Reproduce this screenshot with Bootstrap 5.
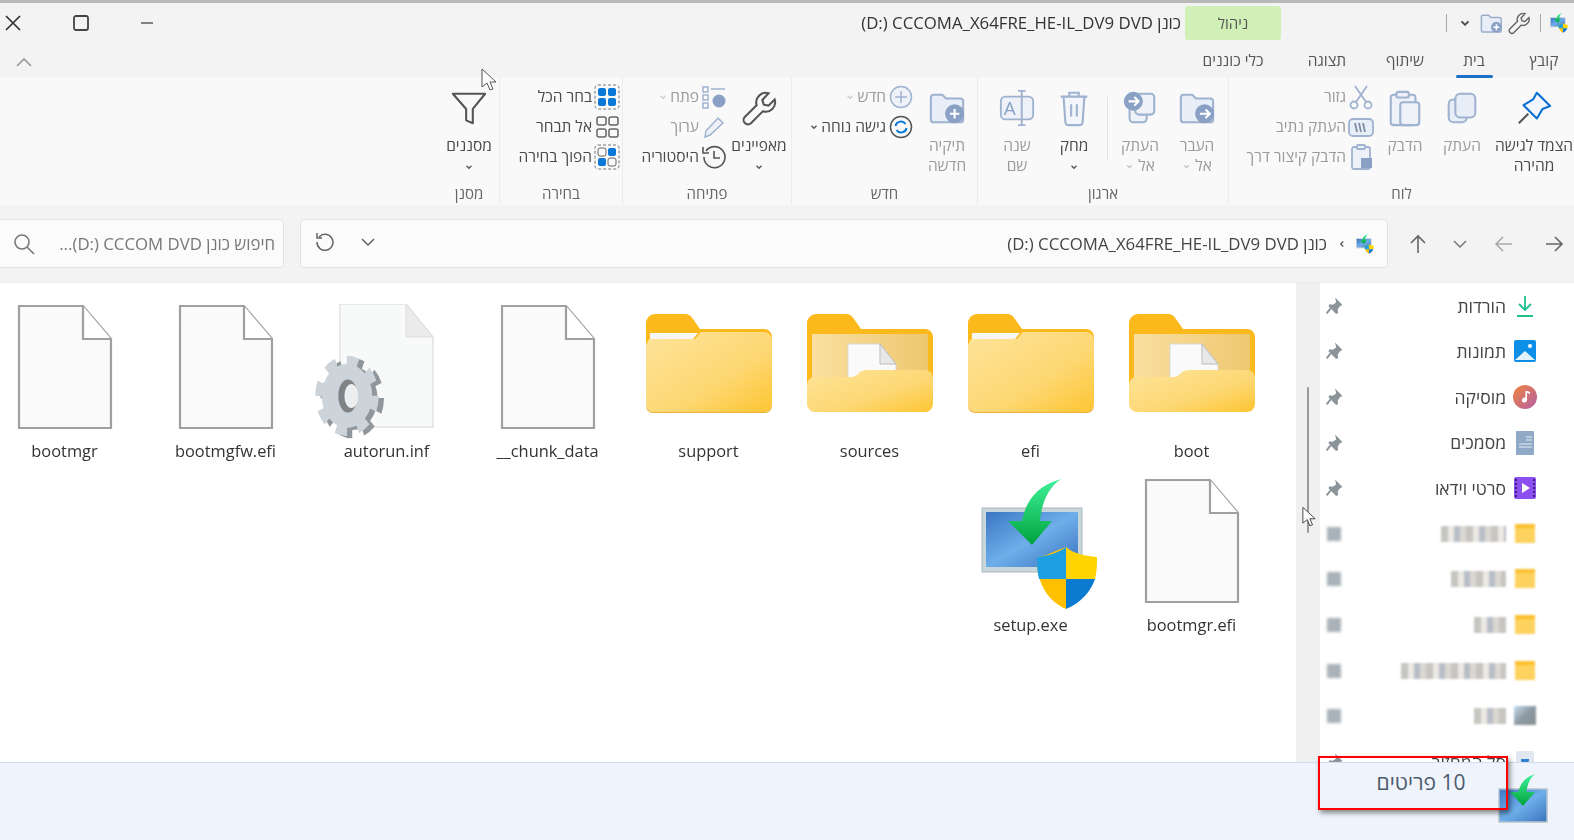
<!DOCTYPE html>
<html lang="he" dir="rtl">
<head>
<meta charset="utf-8">
<title>כונן DVD</title>
<link href="https://cdn.jsdelivr.net/npm/bootstrap@5.3.0/dist/css/bootstrap.min.css" rel="stylesheet">
<style>
html,body{margin:0;width:1574px;height:840px;overflow:hidden;background:#f3f3f3}
body{font-family:"Open Sans","Noto Sans","Liberation Sans",sans-serif;color:#444}
.stage{width:1574px;height:840px;position:relative;overflow:hidden}
.win{width:1574px;height:840px;background:#f3f3f3;filter:blur(.35px)}
.topline{height:3px;background:#b9b9b9;flex:none}
.titlerow{height:40px;flex:none}
.tsep{width:1px;height:18px;background:#aaa}
.qa{margin:0 5px 0 0}
.gapw{margin-left:9px}
.gapf{margin-left:4px}
.gapc{margin-left:3px;margin-right:7px}
.sepg{margin-left:165px;margin-right:8px}
.manage{width:96px;height:34px;background:#d0f0b7;border-radius:3px;font-size:15px;color:#555;flex:none}
.wtitle{font-size:16.800px;color:#333;margin-right:4px;white-space:nowrap}
.wctl{gap:52px;padding-left:4px}
.tabsrow{height:34px;flex:none;font-size:15.500px;color:#555;padding-top:3px}
.rtab{text-align:center;position:relative;line-height:30px;padding-bottom:4px}
.w60{width:60px}.w80{width:80px}.w58{width:58px}.w98{width:98px}.w90{width:90px}
.rtab-on::after{content:"";position:absolute;bottom:1px;left:22px;right:21px;height:3px;background:#1a73c9;border-radius:2px}
.ribbon{height:128px;background:#f9f9f9;flex:none}
.rgroup{height:128px;border-left:1px solid #ececec;padding-top:4px;flex:none}
.rbody{height:102px}
.rcap{height:20px;line-height:20px;text-align:center;font-size:15px;color:#666}
.g1{width:346px}.g2{width:251px}.g3{width:186px}.g4{width:169px}.g5{width:123px}.g6{width:60px;border-left:0}
.rlg{flex:none;text-align:center;font-size:15.500px;line-height:20px;color:#9b9b9b}
.rlg svg{display:block;margin:8px auto 8px;width:38px;height:38px}
.rlg.dark,.rsm.dark{color:#4a4a4a}
.b80{width:80px;display:flex;flex-direction:column;align-items:center;white-space:nowrap}
.b64{width:64px}.b50{width:50px}.b62{width:62px}.b52{width:52px}.b56{width:56px}.b58{width:58px}.b60{width:60px}
.rvsep{width:1px;height:64px;background:#e2e2e2;margin:16px 6px 0 5px;flex:none}
.rsm{height:30px;padding-top:2px;font-size:15.500px;color:#9b9b9b;white-space:nowrap;gap:2px}
.rsm svg.ic{width:26px;height:26px;flex:none}
.smcol{padding-right:6px}
.smcol3{padding-right:3px}
.selic{margin-right:2px}
.chev{width:10px;height:10px;display:inline-block;vertical-align:middle}
.addr{height:77px;flex:none;padding:14px 0}
.navbtns{width:186px;flex:none;padding-right:9px}
.navbtns svg{width:22px;height:22px}
.navbtns svg.nb1{margin-left:28px}
.navbtns svg.nb2{margin-left:25px}
.navbtns svg.nb3{width:16px;height:16px;margin-left:23px}
.abar{height:49px;width:1088px;flex:none;background:#fbfbfb;border:1px solid #e3e3e3;border-radius:4px;font-size:16.800px;color:#444;padding:0 12px 0 9px}
.crumb{margin-right:6px}
.sbar{height:49px;width:290px;flex:none;margin-right:16px;background:#fbfbfb;border:1px solid #e3e3e3;border-radius:4px;font-size:16.800px;color:#777;padding:0 8px 0 0;white-space:nowrap}
.mainarea{height:480px;flex:none;background:#fff;border-top:1px solid #ececec}
.navpane{width:254px;flex:none;overflow:hidden;background:#fff}
.navrow{height:45.600px;padding:0 37px 0 0;font-size:17.500px;color:#444;white-space:nowrap;flex:none;gap:7px}
.navic{width:24px;height:24px;flex:none}
.navpin{width:18px;height:18px;flex:none;margin-right:auto;margin-left:5px}
.mosaic{height:16px;background:repeating-linear-gradient(90deg,#c6c5c0 0 7px,#ece9e4 7px 13px,#b7bec6 13px 19px,#dbd7d2 19px 25px);filter:blur(1.2px)}
.m60{width:65px}.m50{width:55px}.m30{width:32px}.m100{width:105px}
.blurbox{width:24px;height:20px;display:flex;justify-content:center;flex:none}
.blurfold{width:20px;height:19px;background:#fdd25e;border-top:4px solid #fbbf2e;filter:blur(1px)}
.blurdesk{width:22px;height:19px;background:linear-gradient(135deg,#c6dcf0 0,#8c9aa4 50%,#8a8f92 100%);filter:blur(1.2px)}
.blurpin{width:14px;height:14px;background:#a9b2b8;filter:blur(1.6px);margin-right:auto;margin-left:7px;flex:none}
.sbtrack{width:24px;flex:none;background:#f0f0f0}
.sbthumb{width:2.500px;height:146px;background:#9a9a9a;border-radius:2px;margin:104px auto 0}
.content{flex:1 1 auto;overflow:hidden;min-width:0;padding:21px 24px 0 0}
.filegrid{display:grid;grid-template-columns:repeat(8,161px);grid-auto-rows:174px;width:1288px}
.fcell{text-align:center;font-size:16.400px;color:#333;white-space:nowrap}
.ficon{height:126px;display:flex;align-items:center;justify-content:center;margin-bottom:9px}
.fld{margin-top:-8px}
.setupbig{margin-left:18px;margin-top:8px}
.gearfile{margin-top:14px}
.status{flex:1 1 auto;background:#eff3fb;border-top:1px solid #d5deee}
.setupsm{width:50px;height:50px;margin:10px 26px 0 0;display:block}
.itemsbox{position:absolute;left:1318px;top:756px;width:190px;height:54px;border:2.500px solid #f00;box-shadow:2px 3px 5px rgba(0,0,0,.45);font-size:21px;color:#4d5a6c;padding-left:16px}
.cursor1,.cursor2{position:absolute}
.cursor1{left:481px;top:68px;width:16px;height:24px}
.cursor2{left:1302px;top:506px;width:14px;height:22px}
</style>
</head>
<body>
<svg width="0" height="0" class="position-absolute">
 <defs>
  <linearGradient id="fg" x1="0" y1="0" x2="1" y2="1"><stop offset="0" stop-color="#fee49a"/><stop offset=".6" stop-color="#fdd772"/><stop offset="1" stop-color="#fdc532"/></linearGradient>
  <linearGradient id="fi" x1="0" y1="0" x2="1" y2="0"><stop offset="0" stop-color="#fadf9f"/><stop offset="1" stop-color="#eec870"/></linearGradient>
  <linearGradient id="mon" x1="0" y1="0" x2="1" y2="1"><stop offset="0" stop-color="#3b76c2"/><stop offset=".5" stop-color="#6eaeea"/><stop offset="1" stop-color="#3a72bd"/></linearGradient>
  <linearGradient id="arr" x1="0" y1="0" x2="0" y2="1"><stop offset="0" stop-color="#3ff29a"/><stop offset="1" stop-color="#00a23c"/></linearGradient>
  <linearGradient id="mus" x1="0" y1="0" x2="1" y2="1"><stop offset="0" stop-color="#f0843c"/><stop offset="1" stop-color="#b45fa8"/></linearGradient>
  <symbol id="folder" viewBox="0 0 126 100">
   <path d="M0 10a9 9 0 0 1 9-9h29c5 0 7 2 9 5l7 10h64a8 8 0 0 1 8 8v30H0z" fill="#fcb91b"/>
   <path d="M4 20h48l-5 6H4z" fill="#f6f6f2"/>
   <path d="M0 32l3-6h46l6-7h63a8 8 0 0 1 8 8v64a8 8 0 0 1-8 8H8a8 8 0 0 1-8-8z" fill="url(#fg)"/>
   <path d="M0 92a8 8 0 0 0 8 7h110a8 8 0 0 0 8-7v1a7 7 0 0 1-7 7H7a7 7 0 0 1-7-7z" fill="#eeb23a"/>
  </symbol>
  <symbol id="folderdoc" viewBox="0 0 126 100">
   <path d="M0 10a9 9 0 0 1 9-9h29c5 0 7 2 9 5l7 10h64a8 8 0 0 1 8 8v50H0z" fill="#fcb91b"/>
   <rect x="5" y="21" width="116" height="50" fill="url(#fi)"/>
   <path d="M41 31h32l16 20v22H41z" fill="#fafafa" stroke="#d9d9d9"/>
   <path d="M73 31v20h16z" fill="#e8e8e8" stroke="#bbb"/>
   <path d="M0 72a8 8 0 0 1 8-8h34c3 0 6 0 9-3 3-3 5-4 9-4h58a8 8 0 0 1 8 7v27a8 8 0 0 1-8 8H8a8 8 0 0 1-8-8z" fill="url(#fg)"/>
  </symbol>
  <symbol id="file" viewBox="0 0 96 126">
   <path d="M2 2h64l28 33v89H2z" fill="#fafafa" stroke="#a0a0a0" stroke-width="2.200"/>
   <path d="M66 2v33h28" fill="#fff" stroke="#a0a0a0" stroke-width="2.200"/>
  </symbol>
  <symbol id="setup" viewBox="0 0 118 132">
   <rect x="1" y="29" width="100" height="64" fill="#c9d6dc" stroke="#a9b8be"/>
   <rect x="5" y="33" width="92" height="55" fill="url(#mon)"/>
   <path d="M80 0C58 6 45 20 41 42H27l24 24 20-24H59C61 22 68 8 80 0z" fill="url(#arr)"/>
   <g transform="translate(1 2)">
    <path d="M55 76c10-1 15-5 29-10v62c-18-8-30-26-29-52z" fill="#ffc000"/>
    <path d="M55 76c10-1 19-3 29-10v32H57c-2-8-2-14-2-22z" fill="#1f9fe3"/>
    <path d="M84 66c8 7 20 9 31 10 0 8 0 14-2 22H84z" fill="#ffd400"/>
    <path d="M84 98h29c-4 12-14 24-29 30z" fill="#0b7ad1"/>
   </g>
  </symbol>
  <symbol id="pinn" viewBox="0 0 16 16"><path d="M9 .5l6.500 6.500-2.200 1.200-2 3 .4 3-1.800.8-6.800-6.800.8-1.800 3 .4 3-2z" fill="#8b9499"/><path d="M5 10l-3.500 4.500" stroke="#8b9499" stroke-width="1.800"/></symbol>
  <symbol id="chv" viewBox="0 0 10 10"><path d="M2.500 3.800L5 6.300l2.500-2.500" fill="none" stroke="currentColor" stroke-width="1.300"/></symbol>
 </defs>
</svg>

<div class="stage">
<div class="win d-flex flex-column">
 <div class="topline"></div>

 <div class="titlerow d-flex align-items-center">
  <svg width="20" height="20" viewBox="0 0 118 132" class="qa ms-2"><use href="#setup"/></svg>
  <div class="tsep gapw"></div>
  <svg width="24" height="24" viewBox="0 0 40 40" fill="none" stroke="#666" stroke-width="2.400" class="gapf"><path d="M30 4.500a10 10 0 0 0-12.500 12.500L5 29.500a4.600 4.600 0 0 0 6.500 6.500L24 23.500A10 10 0 0 0 36.500 11l-6.500 6.500-5-1-1.500-5z"/></svg>
  <svg width="24" height="24" viewBox="0 0 40 40" fill="#e8eef7" stroke="#9aaecb" stroke-width="2.500"><path d="M4 10a3 3 0 0 1 3-3h9l4 4h14a3 3 0 0 1 3 3v18a3 3 0 0 1-3 3H7a3 3 0 0 1-3-3z"/><circle cx="29" cy="27" r="9" fill="#8aa0c4" stroke="none"/><path d="M29 22v10M24 27h10" stroke="#fff"/></svg>
  <svg class="chev gapc" style="width:14px;height:14px;color:#444"><use href="#chv"/></svg>
  <div class="tsep sepg"></div>
  <div class="manage d-flex align-items-center justify-content-center">ניהול</div>
  <div class="wtitle">כונן <bdi dir="ltr">(D:) CCCOMA_X64FRE_HE-IL_DV9 DVD</bdi></div>
  <div class="wctl d-flex align-items-center me-auto">
   <svg width="14" height="14" viewBox="0 0 14 14"><path d="M1 7h12" stroke="#444" stroke-width="1.300"/></svg>
   <svg width="24" height="16" viewBox="0 0 24 16" style="margin:0 -5px"><rect x="5" y="1" width="14" height="14" rx="2" fill="none" stroke="#444" stroke-width="1.800"/></svg>
   <svg width="18" height="18" viewBox="0 0 18 18"><path d="M2 2l14 14M16 2L2 16" stroke="#333" stroke-width="1.700"/></svg>
  </div>
 </div>

 <div class="tabsrow d-flex align-items-center">
  <div class="rtab w60">קובץ</div>
  <div class="rtab w80 rtab-on">בית</div>
  <div class="rtab w58">שיתוף</div>
  <div class="rtab w98">תצוגה</div>
  <div class="rtab w90">כלי כוננים</div>
  <svg width="18" height="12" viewBox="0 0 18 12" class="me-auto" style="margin-left:15px"><path d="M2 10l7-7 7 7" fill="none" stroke="#999" stroke-width="1.600"/></svg>
 </div>

 <div class="ribbon d-flex">
  <!-- לוח -->
  <div class="rgroup g1 d-flex flex-column">
   <div class="rbody d-flex">
    <div class="rlg b80 dark"><svg viewBox="0 0 40 40" fill="none"><path d="M4 36l10-10" stroke="#555" stroke-width="2.200"/><path d="M23 4l14 14-8 3-6 10-14-14 10-6z" fill="#f2f7fd" stroke="#0a6fd0" stroke-width="2.200" stroke-linejoin="round"/></svg><span>הצמד לגישה</span><span>מהירה</span></div>
    <div class="rlg b64"><svg viewBox="0 0 40 40" fill="#e8eef7" stroke="#9fb2cf" stroke-width="2.200"><rect x="6" y="11" width="19" height="24" rx="5"/><rect x="13" y="5" width="21" height="25" rx="5"/></svg>העתק</div>
    <div class="rlg b50"><svg viewBox="0 0 40 40" fill="#eef2f8" stroke="#9fb2cf" stroke-width="2.200"><rect x="5" y="6" width="26" height="32" rx="3"/><rect x="11" y="3" width="13" height="6" rx="2"/><rect x="15" y="14" width="20" height="24" rx="3"/></svg>הדבק</div>
    <div class="smcol">
     <div class="rsm d-flex align-items-center"><svg class="ic" viewBox="0 0 26 26" fill="none" stroke="#9fb2cf" stroke-width="1.800"><circle cx="6" cy="21" r="3.500"/><circle cx="20" cy="21" r="3.500"/><path d="M8 18L19 2M18 18L7 2"/></svg>גזור</div>
     <div class="rsm d-flex align-items-center"><svg class="ic" viewBox="0 0 26 26" fill="#e8eef7" stroke="#9fb2cf" stroke-width="1.800"><rect x="1" y="5" width="24" height="17" rx="4"/><path d="M7 9l2 9M11 9l2 9M15 9l2 9" stroke="#7f8fa8" fill="none"/></svg>העתק נתיב</div>
     <div class="rsm d-flex align-items-center"><svg class="ic" viewBox="0 0 26 26" fill="#eef2f8" stroke="#9fb2cf" stroke-width="1.800"><rect x="4" y="3" width="18" height="22" rx="2"/><rect x="9" y="1" width="8" height="4" rx="1"/><rect x="13" y="14" width="11" height="10" fill="#8aa0c4" stroke="none"/></svg>הדבק קיצור דרך</div>
    </div>
   </div>
   <div class="rcap">לוח</div>
  </div>
  <!-- ארגון -->
  <div class="rgroup g2 d-flex flex-column">
   <div class="rbody d-flex">
    <div class="rlg b62"><svg viewBox="0 0 40 40" fill="#e8eef7" stroke="#9fb2cf" stroke-width="2.200"><path d="M3 9a3 3 0 0 1 3-3h9l4 4h15a3 3 0 0 1 3 3v19a3 3 0 0 1-3 3H6a3 3 0 0 1-3-3z"/><circle cx="28" cy="26" r="10" fill="#8aa0c4" stroke="none"/><path d="M23 26h10M29 21.500l4.500 4.500-4.500 4.500" fill="none" stroke="#fff"/></svg>העבר<br>אל <svg class="chev d-inline-block m-0" style="width:9px;height:9px;color:#bbb"><use href="#chv"/></svg></div>
    <div class="rlg b52"><svg viewBox="0 0 40 40" fill="#eef2f8" stroke="#9fb2cf" stroke-width="2.200"><rect x="9" y="18" width="18" height="17" rx="4"/><rect x="15" y="5" width="20" height="22" rx="4"/><circle cx="13" cy="13" r="10" fill="#8aa0c4" stroke="none"/><path d="M8 13h10M14 8.500l4.500 4.500-4.500 4.500" fill="none" stroke="#fff"/></svg>העתק<br>אל <svg class="chev d-inline-block m-0" style="width:9px;height:9px;color:#bbb"><use href="#chv"/></svg></div>
    <div class="rvsep"></div>
    <div class="rlg b56 dark"><svg viewBox="0 0 40 40" fill="#f2f5fa" stroke="#9fb2cf" stroke-width="2.200"><path d="M6 8h28M15 8V4h10v4M9 8l2 28a3 3 0 0 0 3 2h12a3 3 0 0 0 3-2l2-28"/><path d="M17 16v13M23 16v13" fill="none"/></svg>מחק<br><svg class="chev d-inline-block m-0" style="width:10px;height:10px;color:#555"><use href="#chv"/></svg></div>
    <div class="rlg b58"><svg viewBox="0 0 40 40" fill="#eef2f8" stroke="#9fb2cf" stroke-width="2"><rect x="3" y="8" width="34" height="24" rx="5"/><path d="M25 2v36M21 2h8M21 38h8" fill="none"/><text x="6" y="27" font-size="20" fill="#8aa0c4" stroke="none" font-family="Open Sans" direction="ltr">A</text></svg>שנה<br>שם</div>
   </div>
   <div class="rcap">ארגון</div>
  </div>
  <!-- חדש -->
  <div class="rgroup g3 d-flex flex-column">
   <div class="rbody d-flex">
    <div class="rlg b60"><svg viewBox="0 0 40 40" fill="#e8eef7" stroke="#9fb2cf" stroke-width="2.200"><path d="M3 9a3 3 0 0 1 3-3h9l4 4h15a3 3 0 0 1 3 3v19a3 3 0 0 1-3 3H6a3 3 0 0 1-3-3z"/><circle cx="28" cy="26" r="10" fill="#8aa0c4" stroke="none"/><path d="M28 21v10M23 26h10" stroke="#fff"/></svg>תיקיה<br>חדשה</div>
    <div class="smcol3">
     <div class="rsm d-flex align-items-center"><svg class="ic" viewBox="0 0 26 26" fill="#eef2f8" stroke="#9fb2cf" stroke-width="1.500"><circle cx="13" cy="13" r="10.500"/><path d="M13 7v12M7 13h12" fill="none"/></svg>חדש <svg class="chev" style="color:#ccc"><use href="#chv"/></svg></div>
     <div class="rsm d-flex align-items-center dark"><svg class="ic" viewBox="0 0 26 26" fill="none" stroke="#555" stroke-width="1.500"><circle cx="13" cy="13" r="10.500"/><path d="M7.500 12a5.500 5.500 0 0 1 10-2M18.500 14a5.500 5.500 0 0 1-10 2" stroke="#0a78d7" stroke-width="2"/></svg>גישה נוחה <svg class="chev" style="color:#555"><use href="#chv"/></svg></div>
    </div>
   </div>
   <div class="rcap">חדש</div>
  </div>
  <!-- פתיחה -->
  <div class="rgroup g4 d-flex flex-column">
   <div class="rbody d-flex">
    <div class="rlg b64 dark"><svg viewBox="0 0 40 40" fill="none" stroke="#555" stroke-width="2.200"><path d="M30 4.500a10 10 0 0 0-12.500 12.500L5 29.500a4.600 4.600 0 0 0 6.500 6.500L24 23.500A10 10 0 0 0 36.500 11l-6.500 6.500-5-1-1.500-5z"/></svg>מאפיינים<br><svg class="chev d-inline-block m-0" style="width:10px;height:10px;color:#555"><use href="#chv"/></svg></div>
    <div>
     <div class="rsm d-flex align-items-center"><svg class="ic" viewBox="0 0 26 26" fill="none" stroke="#9fb2cf" stroke-width="1.500"><rect x="2" y="3" width="5" height="5"/><rect x="2" y="11" width="5" height="5"/><rect x="2" y="19" width="5" height="5"/><path d="M10 5h14"/><circle cx="18" cy="17" r="6.500" fill="#8aa0c4" stroke="none"/></svg>פתח <svg class="chev" style="color:#ccc"><use href="#chv"/></svg></div>
     <div class="rsm d-flex align-items-center"><svg class="ic" viewBox="0 0 26 26" fill="#eef2f8" stroke="#9fb2cf" stroke-width="1.500"><path d="M4 23l1-6L17 4l5 5L9 21z"/></svg>ערוך</div>
     <div class="rsm d-flex align-items-center dark"><svg class="ic" viewBox="0 0 26 26" fill="none" stroke="#555" stroke-width="1.600"><path d="M5 7a10.500 10.500 0 1 1-2 6"/><path d="M2 3v6h6M13 7v7h6"/></svg>היסטוריה</div>
    </div>
   </div>
   <div class="rcap">פתיחה</div>
  </div>
  <!-- בחירה -->
  <div class="rgroup g5 d-flex flex-column">
   <div class="rbody">
    <div class="rsm d-flex align-items-center dark"><svg class="ic selic" viewBox="0 0 26 26"><rect x="1" y="1" width="24" height="24" rx="3" fill="none" stroke="#777" stroke-dasharray="3 2"/><rect x="4" y="4" width="8" height="8" rx="2" fill="#0a78d7"/><rect x="14" y="4" width="8" height="8" rx="2" fill="#0a78d7"/><rect x="4" y="14" width="8" height="8" rx="2" fill="#0a78d7"/><rect x="14" y="14" width="8" height="8" rx="2" fill="#0a78d7"/></svg>בחר הכל</div>
    <div class="rsm d-flex align-items-center dark"><svg class="ic selic" viewBox="0 0 26 26" fill="none" stroke="#666" stroke-width="1.500"><rect x="3" y="3" width="9" height="8" rx="2"/><rect x="15" y="3" width="9" height="8" rx="2"/><rect x="3" y="15" width="9" height="8" rx="2"/><rect x="15" y="15" width="9" height="8" rx="2"/></svg>אל תבחר</div>
    <div class="rsm d-flex align-items-center dark"><svg class="ic selic" viewBox="0 0 26 26"><rect x="1" y="1" width="24" height="24" rx="3" fill="none" stroke="#777" stroke-dasharray="3 2"/><rect x="4" y="4" width="8" height="8" rx="2" fill="none" stroke="#666"/><rect x="14" y="4" width="8" height="8" rx="2" fill="#0a78d7"/><rect x="4" y="14" width="8" height="8" rx="2" fill="#0a78d7"/><rect x="14" y="14" width="8" height="8" rx="2" fill="none" stroke="#666"/></svg>הפוך בחירה</div>
   </div>
   <div class="rcap">בחירה</div>
  </div>
  <!-- מסנן -->
  <div class="rgroup g6 d-flex flex-column">
   <div class="rbody">
    <div class="rlg dark"><svg viewBox="0 0 40 40" fill="none" stroke="#555" stroke-width="2.200" stroke-linejoin="round"><path d="M3 5h34L24 21v15l-7-3V21z"/></svg>מסננים<br><svg class="chev d-inline-block m-0" style="width:10px;height:10px;color:#555"><use href="#chv"/></svg></div>
   </div>
   <div class="rcap">מסנן</div>
  </div>
 </div>

 <div class="addr d-flex">
  <div class="navbtns d-flex align-items-center">
   <svg class="nb1" viewBox="0 0 22 22" fill="none" stroke="#666" stroke-width="1.600"><path d="M3 11h16M12 4l7 7-7 7"/></svg>
   <svg class="nb2" viewBox="0 0 22 22" fill="none" stroke="#aaa" stroke-width="1.600"><path d="M19 11H3M10 4l-7 7 7 7"/></svg>
   <svg class="nb3" viewBox="0 0 16 16" fill="none" stroke="#777" stroke-width="1.500"><path d="M2 5l6 6 6-6"/></svg>
   <svg viewBox="0 0 22 22" fill="none" stroke="#666" stroke-width="1.600"><path d="M11 20V3M4 10l7-7 7 7"/></svg>
  </div>
  <div class="abar d-flex align-items-center">
   <svg width="20" height="20" viewBox="0 0 118 132" class="ms-2"><use href="#setup"/></svg>
   <svg class="chev ms-1" style="color:#555"><use href="#chv" transform="rotate(90 5 5)"/></svg>
   <span class="crumb">כונן <bdi dir="ltr">(D:) CCCOMA_X64FRE_HE-IL_DV9 DVD</bdi></span>
   <svg width="16" height="16" viewBox="0 0 16 16" fill="none" stroke="#666" stroke-width="1.500" class="me-auto ms-4 mb-1"><path d="M2 5l6 6 6-6"/></svg>
   <svg width="22" height="22" viewBox="0 0 22 22" fill="none" stroke="#666" stroke-width="1.500" class="mb-1 ms-1"><path d="M5 6a8 8 0 1 1-2 5"/><path d="M3 2v5h5"/></svg>
  </div>
  <div class="sbar d-flex align-items-center">
   <span>חיפוש כונן <bdi dir="ltr">...(D:) CCCOM DVD</bdi></span>
   <svg width="24" height="24" viewBox="0 0 24 24" fill="none" stroke="#777" stroke-width="1.600" class="me-auto" style="margin-left:17px"><circle cx="10" cy="10" r="7"/><path d="M15 15l7 7"/></svg>
  </div>
 </div>

 <div class="mainarea d-flex">
  <div class="navpane d-flex flex-column">
   <div class="navrow d-flex align-items-center"><svg class="navic" viewBox="0 0 24 24" fill="none" stroke="#1fbf8f" stroke-width="1.800"><path d="M12 2v14M6 10l6 6 6-6M4 22h16"/></svg><span>הורדות</span><svg class="navpin"><use href="#pinn"/></svg></div>
   <div class="navrow d-flex align-items-center"><svg class="navic" viewBox="0 0 24 24"><rect x="1" y="1" width="22" height="22" rx="2" fill="#0d8fe8"/><path d="M2 21l10-9 10 9z" fill="#e4f2fb"/><circle cx="17" cy="7" r="2" fill="#fff"/></svg><span>תמונות</span><svg class="navpin"><use href="#pinn"/></svg></div>
   <div class="navrow d-flex align-items-center"><svg class="navic" viewBox="0 0 24 24"><circle cx="12" cy="12" r="12" fill="url(#mus)"/><path d="M14 6v9a2.500 2.500 0 1 1-1.600-2.300V6z" fill="#fff"/><path d="M14 6l3 1v2l-3-1z" fill="#fff"/></svg><span>מוסיקה</span><svg class="navpin"><use href="#pinn"/></svg></div>
   <div class="navrow d-flex align-items-center"><svg class="navic" viewBox="0 0 24 24"><rect x="3" y="0" width="18" height="24" rx="1" fill="#8fa9c6"/><path d="M13 6h6M13 9h6M6 13h13M6 16h13" stroke="#e8eef5" stroke-width="1.100"/></svg><span>מסמכים</span><svg class="navpin"><use href="#pinn"/></svg></div>
   <div class="navrow d-flex align-items-center"><svg class="navic" viewBox="0 0 24 24"><rect x="1" y="1" width="22" height="22" rx="2" fill="#8c4ff0"/><path d="M9 7l8 5-8 5z" fill="#fff"/><path d="M3 3v18" stroke="#3c2180" stroke-width="2" stroke-dasharray="2 2"/><path d="M21 3v18" stroke="#3c2180" stroke-width="2" stroke-dasharray="2 2"/></svg><span>סרטי וידאו</span><svg class="navpin"><use href="#pinn"/></svg></div>
   <div class="navrow d-flex align-items-center"><div class="blurbox"><div class="blurfold"></div></div><div class="mosaic m60"></div><div class="blurpin"></div></div>
   <div class="navrow d-flex align-items-center"><div class="blurbox"><div class="blurfold"></div></div><div class="mosaic m50"></div><div class="blurpin"></div></div>
   <div class="navrow d-flex align-items-center"><div class="blurbox"><div class="blurfold"></div></div><div class="mosaic m30"></div><div class="blurpin"></div></div>
   <div class="navrow d-flex align-items-center"><div class="blurbox"><div class="blurfold"></div></div><div class="mosaic m100"></div><div class="blurpin"></div></div>
   <div class="navrow d-flex align-items-center"><div class="blurbox"><div class="blurdesk"></div></div><div class="mosaic m30"></div><div class="blurpin"></div></div>
   <div class="navrow d-flex align-items-center"><svg class="navic" viewBox="0 0 24 24"><rect x="3" y="1" width="18" height="22" rx="2" fill="#dfe8f1"/><path d="M8 9h8l-1 10H9z" fill="#2f7fd0"/></svg><span>סל המחזור</span><svg class="navpin"><use href="#pinn"/></svg></div>
  </div>
  <div class="sbtrack"><div class="sbthumb"></div></div>
  <div class="content">
   <div class="filegrid">
    <div class="fcell"><div class="ficon"><svg class="fld" width="126" height="100"><use href="#folderdoc"/></svg></div><bdi dir="ltr">boot</bdi></div>
    <div class="fcell"><div class="ficon"><svg class="fld" width="126" height="100"><use href="#folder"/></svg></div><bdi dir="ltr">efi</bdi></div>
    <div class="fcell"><div class="ficon"><svg class="fld" width="126" height="100"><use href="#folderdoc"/></svg></div><bdi dir="ltr">sources</bdi></div>
    <div class="fcell"><div class="ficon"><svg class="fld" width="126" height="100"><use href="#folder"/></svg></div><bdi dir="ltr">support</bdi></div>
    <div class="fcell"><div class="ficon"><svg width="96" height="126"><use href="#file"/></svg></div><bdi dir="ltr">__chunk_data</bdi></div>
    <div class="fcell"><div class="ficon">
     <svg class="gearfile" width="146" height="140" viewBox="-20 0 146 140">
      <path d="M6 0h66l27 33v90H6z" fill="#f8f9f9" stroke="#e2e2e2" stroke-width="1.500"/>
      <path d="M72 0v33h27z" fill="#ebebeb" stroke="#ddd"/>
      <g transform="translate(13 92) scale(.87 1.100)">
       <circle cx="6" cy="2" r="30" fill="none" stroke="#8f979c" stroke-width="13" stroke-dasharray="12 11.500"/>
       <circle cx="6" cy="2" r="29" fill="#8f979c"/>
       <circle cx="0" cy="0" r="30" fill="none" stroke="#ccd4da" stroke-width="13" stroke-dasharray="12 11.500"/>
       <circle cx="0" cy="0" r="29" fill="#ccd4da"/>
       <ellipse cx="1" cy="0" rx="11" ry="15" fill="#7f8386"/>
       <ellipse cx="5" cy="0" rx="8" ry="11" fill="#eceeef"/>
      </g>
     </svg></div><bdi dir="ltr">autorun.inf</bdi></div>
    <div class="fcell"><div class="ficon"><svg width="96" height="126"><use href="#file"/></svg></div><bdi dir="ltr">bootmgfw.efi</bdi></div>
    <div class="fcell"><div class="ficon"><svg width="96" height="126"><use href="#file"/></svg></div><bdi dir="ltr">bootmgr</bdi></div>
    <div class="fcell"><div class="ficon"><svg width="96" height="126"><use href="#file"/></svg></div><bdi dir="ltr">bootmgr.efi</bdi></div>
    <div class="fcell"><div class="ficon"><svg class="setupbig" width="118" height="132"><use href="#setup"/></svg></div><bdi dir="ltr">setup.exe</bdi></div>
   </div>
  </div>
 </div>

 <div class="status">
  <svg class="setupsm" viewBox="0 0 100 100"><rect x="2" y="32" width="96" height="66" fill="url(#mon)" stroke="#b5c3cc" stroke-width="3"/><path d="M74 2C54 8 44 22 41 38H24l26 28 24-28H57C59 22 64 10 74 2z" fill="url(#arr)"/></svg>
 </div>
</div>

<div class="itemsbox d-flex align-items-center justify-content-center">10 פריטים</div>
<svg class="cursor1" viewBox="0 0 16 24"><path d="M1 1v18l5-4 3 7 3-1-3-7h6z" fill="#fff" stroke="#555" stroke-width="1"/></svg>
<svg class="cursor2" viewBox="0 0 16 24"><path d="M1 1v18l5-4 3 7 3-1-3-7h6z" fill="#fff" stroke="#333" stroke-width="1"/></svg>
</div>
<script src="https://cdn.jsdelivr.net/npm/bootstrap@5.3.0/dist/js/bootstrap.bundle.min.js"></script>
</body>
</html>
